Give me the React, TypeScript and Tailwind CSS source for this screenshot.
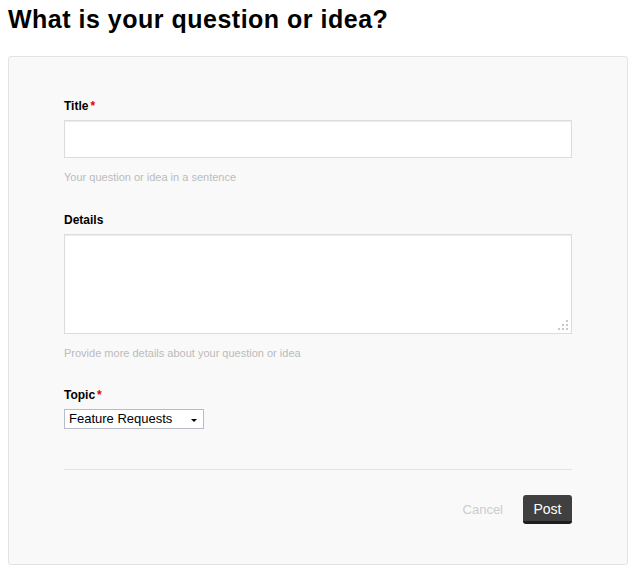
import React from "react";

function Label({ text, required }: { text: string; required?: boolean }) {
  return (
    <div className="text-[12px] leading-4 font-bold text-black">
      {text}
      {required && <span className="ml-[2px] text-[#e00000]">*</span>}
    </div>
  );
}

function Hint({ children }: { children: React.ReactNode }) {
  return <div className="text-[11px] leading-4 text-[#bbbbbb]">{children}</div>;
}

export default function App() {
  return (
    <div
      className="min-h-[569px] bg-white px-2"
      style={{ fontFamily: '"Liberation Sans", Arial, sans-serif' }}
    >
      <h1 className="mt-[5px] mb-[23px] text-[25px] leading-7 font-bold tracking-[0.5px] text-black">
        What is your question or idea?
      </h1>

      <div className="w-[620px] rounded-[3px] border border-[#e3e3e3] bg-[#f9f9f9] px-[55px] pt-[41px] pb-[40px]">
        {/* Title */}
        <Label text="Title" required />
        <div className="mt-1.5 h-[38px] w-[508px] border border-[#dcdcdc] bg-white shadow-[inset_0_1px_1px_rgba(0,0,0,0.08)]" />
        <div className="mt-[11px]">
          <Hint>Your question or idea in a sentence</Hint>
        </div>

        {/* Details */}
        <div className="mt-[27px]">
          <Label text="Details" />
        </div>
        <div className="relative mt-1.5 h-[100px] w-[508px] border border-[#dcdcdc] bg-white shadow-[inset_0_1px_1px_rgba(0,0,0,0.08)]">
          <svg
            className="absolute right-[2px] bottom-[2px]"
            width="11"
            height="11"
            viewBox="0 0 11 11"
          >
            <rect x="8" y="0" width="2" height="2" fill="#c8c8c8" />
            <rect x="4" y="4" width="2" height="2" fill="#c8c8c8" />
            <rect x="8" y="4" width="2" height="2" fill="#c8c8c8" />
            <rect x="0" y="8" width="2" height="2" fill="#c8c8c8" />
            <rect x="4" y="8" width="2" height="2" fill="#c8c8c8" />
            <rect x="8" y="8" width="2" height="2" fill="#c8c8c8" />
          </svg>
        </div>
        <div className="mt-[11px]">
          <Hint>Provide more details about your question or idea</Hint>
        </div>

        {/* Topic */}
        <div className="mt-[26px]">
          <Label text="Topic" required />
        </div>
        <div className="mt-1.5 flex h-[20px] w-[140px] items-center justify-between border border-[#b8bcc8] bg-white pr-[6px] pl-[4px] text-[13px] text-black">
          <span>Feature Requests</span>
          <span className="mt-[2px] h-0 w-0 border-x-[3px] border-t-[3px] border-x-transparent border-t-black" />
        </div>

        <div className="mt-[40px] h-px w-[508px] bg-[#e3e3e3]" />

        {/* Actions */}
        <div className="mt-[25px] flex w-[508px] items-center justify-end gap-5">
          <span className="text-[13px] text-[#cccccc]">Cancel</span>
          <button className="h-[29px] w-[49px] rounded-[3px] border-b-[3px] border-[#1f1f1f] bg-[#404040] pt-[2px] text-[14px] text-white">
            Post
          </button>
        </div>
      </div>
    </div>
  );
}
